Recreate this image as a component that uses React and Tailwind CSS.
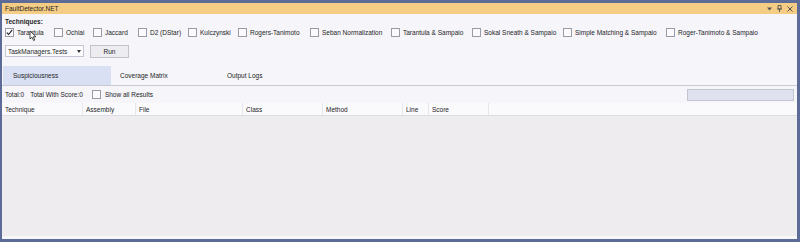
import React from "react";

const techniques = [
  ["Tarantula", 49, true],
  ["Ochiai", 39],
  ["Jaccard", 45],
  ["D2 (DStar)", 50],
  ["Kulczynski", 50],
  ["Rogers-Tanimoto", 72],
  ["Seban Normalization", 81],
  ["Tarantula & Sampaio", 81],
  ["Sokal Sneath & Sampaio", 91],
  ["Simple Matching & Sampaio", 103],
  ["Roger-Tanimoto & Sampaio", 110],
];

const columns = [
  ["Technique", 81],
  ["Assembly", 53],
  ["File", 107],
  ["Class", 80],
  ["Method", 80],
  ["Line", 26],
  ["Score", 60],
];

function Box({ checked }) {
  return (
    <div className="w-[9px] h-[9px] border border-[#9b9ba8] bg-[#fbfbfd] flex items-center justify-center shrink-0">
      {checked && (
        <svg width="7" height="7" viewBox="0 0 7 7">
          <path d="M0.8 3.6 L2.6 5.5 L6.2 0.9" fill="none" stroke="#1e1e1e" strokeWidth="1.1" />
        </svg>
      )}
    </div>
  );
}

export default function App() {
  return (
    <div
      className="w-[800px] h-[242px] bg-[#5d6b99] pt-[3px] pl-[2px] pr-[3px] pb-[3px] flex flex-col text-[#1e1e1e] text-[6.5px] leading-[9px]"
      style={{ fontFamily: '"Liberation Sans", Arial, sans-serif' }}
    >
      {/* Title bar */}
      <div className="h-[11px] bg-[#f5cc84] flex items-center pl-[3px] pr-[4px] shrink-0">
        <span className="text-[#1e1e1e]">FaultDetector.NET</span>
        <div className="ml-auto flex items-center gap-[5px] text-[#444] text-[6px]">
          <svg width="5" height="4" viewBox="0 0 5 4"><path d="M0 0.5 H5 L2.5 3.5 Z" fill="#555" /></svg>
          <svg width="5" height="7" viewBox="0 0 5 7"><path d="M1 0.5 H4 V4 H1 Z M0 4 H5 M2.5 4 V7" fill="none" stroke="#555" strokeWidth="0.9" /></svg>
          <svg width="6" height="6" viewBox="0 0 6 6"><path d="M0.5 0.5 L5.5 5.5 M5.5 0.5 L0.5 5.5" stroke="#555" strokeWidth="1" /></svg>
        </div>
      </div>

      {/* Content */}
      <div className="flex-1 bg-[#f5f5fa] flex flex-col relative">
        <div className="mt-[3px] h-[9px] pl-[3px] font-bold">Techniques:</div>

        <div className="mt-[2px] h-[9px] pl-[3px] flex items-center">
          {techniques.map(([name, w, checked]) => (
            <div key={name} className="flex items-center gap-[3px] shrink-0" style={{ width: w }}>
              <Box checked={checked} />
              <span className="whitespace-nowrap">{name}</span>
            </div>
          ))}
        </div>

        {/* cursor overlay */}
        <svg className="absolute left-[27px] top-[16px]" width="9" height="12" viewBox="0 0 9 12">
          <path d="M1 1 L1 9 L3 7.2 L4.6 10.6 L5.8 10 L4.3 6.8 L7 6.8 Z" fill="#fff" stroke="#222" strokeWidth="0.8" />
        </svg>

        <div className="mt-[8px] h-[12px] pl-[3px] flex items-center gap-[6px]">
          <div className="w-[79px] h-[12px] border border-[#c4c7d4] bg-[#fcfcfe] flex items-center pl-[2px] pr-[2px]">
            <span className="whitespace-nowrap">TaskManagers.Tests</span>
            <svg className="ml-auto" width="4" height="3" viewBox="0 0 4 3"><path d="M0 0 H4 L2 3 Z" fill="#333" /></svg>
          </div>
          <div className="w-[39px] h-[13px] border border-[#c2c3cc] bg-[#ececf1] flex items-center justify-center">
            Run
          </div>
        </div>

        {/* Tabs */}
        <div className="mt-[9px] h-[20px] flex border-b border-[#c9c9d3]">
          <div className="w-[108px] h-[19px] bg-[#dae0f4] flex items-center pl-[10px] ml-[1px]">Suspiciousness</div>
          <div className="w-[107px] h-[19px] flex items-center pl-[9px]">Coverage Matrix</div>
          <div className="w-[107px] h-[19px] flex items-center pl-[9px]">Output Logs</div>
        </div>

        {/* Toolbar */}
        <div className="h-[17px] flex items-center pl-[3px] pr-[3px]">
          <span className="whitespace-nowrap">Total:0</span>
          <span className="whitespace-nowrap ml-[6px]">Total With Score:0</span>
          <div className="ml-[9px] flex items-center gap-[4px]">
            <Box />
            <span className="whitespace-nowrap">Show all Results</span>
          </div>
          <div className="ml-auto w-[107px] h-[12px] bg-[#dfe2ee] border border-[#c2c5d2]" />
        </div>

        {/* Header */}
        <div className="h-[13px] flex bg-[#fafafd] border-b border-[#dcdce3] shrink-0">
          {columns.map(([name, w]) => (
            <div
              key={name}
              className="h-[12px] border-r border-[#e6e6ec] flex items-center pl-[3px] shrink-0"
              style={{ width: w }}
            >
              {name}
            </div>
          ))}
          <div className="flex-1" />
        </div>

        {/* Grid */}
        <div className="flex-1 bg-[#eeecef]" />
        <div className="h-[3px] bg-[#f7f7fa]" />
      </div>
    </div>
  );
}
